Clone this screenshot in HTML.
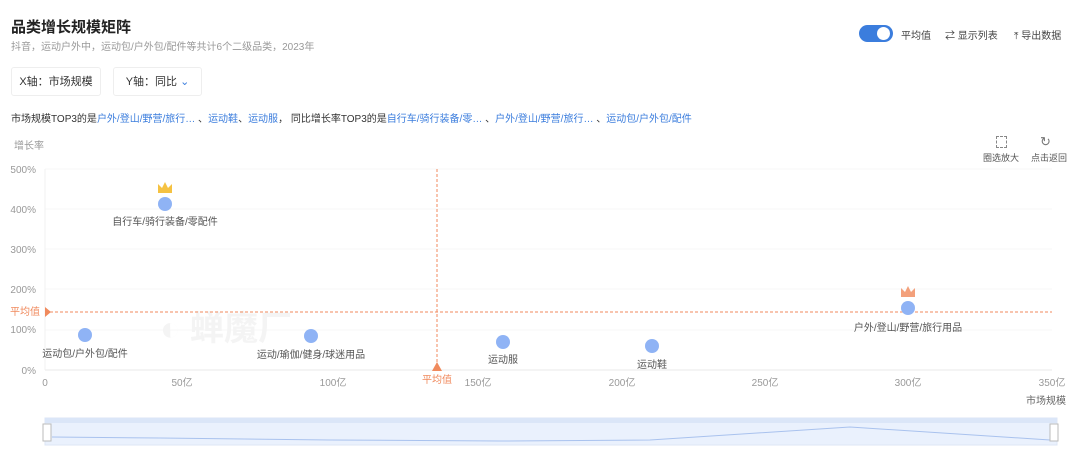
<!DOCTYPE html>
<html><head><meta charset="utf-8"><style>
body{margin:0;width:1080px;height:457px;background:#fff;font-family:"Liberation Sans","Noto Sans CJK SC",sans-serif;position:relative;overflow:hidden;color:#333}
.a{position:absolute;white-space:nowrap}
.btn{position:absolute;top:67px;height:29px;border:1px solid #eee;border-radius:3px;font-size:11px;line-height:29px;color:#333;box-sizing:border-box;white-space:nowrap;text-align:center}
a{color:#3b7ddd;text-decoration:none}
</style></head><body>
<div class="a" style="left:11px;top:16px;font-size:15px;font-weight:bold;color:#222">品类增长规模矩阵</div>
<div class="a" style="left:11px;top:38px;font-size:10px;color:#999">抖音，运动户外中，运动包/户外包/配件等共计6个二级品类，2023年</div>
<div class="btn" style="left:11px;width:90px">X轴：市场规模</div>
<div class="btn" style="left:113px;width:89px">Y轴：同比 <span style="color:#3b7ddd">&#8964;</span></div>
<div class="a" style="left:11px;top:110px;font-size:10px;color:#333">市场规模TOP3的是<a>户外/登山/野营/旅行…</a> 、<a>运动鞋</a>、<a>运动服</a>， 同比增长率TOP3的是<a>自行车/骑行装备/零…</a> 、<a>户外/登山/野营/旅行…</a> 、<a>运动包/户外包/配件</a></div>
<div class="a" style="left:14px;top:137px;font-size:10px;color:#999">增长率</div>
<div class="a" style="left:859px;top:25px;width:34px;height:17px;background:#3b7ddd;border-radius:9px"></div>
<div class="a" style="left:877px;top:27px;width:13px;height:13px;background:#fff;border-radius:50%"></div>
<div class="a" style="left:901px;top:27px;font-size:10px;color:#444">平均值</div>
<div class="a" style="left:945px;top:27px;font-size:10px;color:#444">⇄ 显示列表</div>
<div class="a" style="left:1014px;top:27px;font-size:10px;color:#444">⤒ 导出数据</div>
<div class="a" style="left:996px;top:136px;width:9px;height:10px;border:1px dashed #888"></div>
<div class="a" style="left:1040px;top:134px;font-size:13px;color:#777">↻</div>
<div class="a" style="left:983px;top:151px;font-size:9px;color:#555">圈选放大</div>
<div class="a" style="left:1031px;top:151px;font-size:9px;color:#555">点击返回</div>
<svg class="a" style="left:0;top:0" width="1080" height="457" font-family="Liberation Sans, Noto Sans CJK SC, sans-serif">
<g stroke="#f7f7f7"><line x1="45" x2="1052" y1="169" y2="169"/><line x1="45" x2="1052" y1="209" y2="209"/><line x1="45" x2="1052" y1="249" y2="249"/><line x1="45" x2="1052" y1="289" y2="289"/><line x1="45" x2="1052" y1="330" y2="330"/></g>
<line x1="45" x2="1052" y1="370" y2="370" stroke="#e8e8e8"/>
<line x1="45" x2="45" y1="169" y2="370" stroke="#f0f0f0"/>
<g font-size="10" fill="#999" text-anchor="end"><text x="36" y="173">500%</text><text x="36" y="213">400%</text><text x="36" y="253">300%</text><text x="36" y="293">200%</text><text x="36" y="333">100%</text><text x="36" y="374">0%</text></g>
<g font-size="10" fill="#999" text-anchor="middle"><text x="45" y="386">0</text><text x="182" y="386">50亿</text><text x="333" y="386">100亿</text><text x="478" y="386">150亿</text><text x="622" y="386">200亿</text><text x="765" y="386">250亿</text><text x="908" y="386">300亿</text><text x="1052" y="386">350亿</text></g>
<text x="1066" y="404" font-size="10" fill="#666" text-anchor="end">市场规模</text>
<text x="160" y="340" font-size="34" fill="#f4f4f4" font-weight="bold">◐ 蝉魔厂</text>
<line x1="45" x2="1052" y1="312" y2="312" stroke="#f08a5d" stroke-dasharray="3,2"/>
<line x1="437" x2="437" y1="169" y2="370" stroke="#f08a5d" stroke-dasharray="3,2"/>
<polygon points="45,307 51,312 45,317" fill="#f08a5d"/>
<polygon points="437,362 442,371 432,371" fill="#f08a5d"/>
<text x="10" y="315" font-size="10" fill="#f08a5d">平均值</text>
<text x="422" y="383" font-size="10" fill="#f08a5d">平均值</text>
<g fill="#8fb3f5"><circle cx="85" cy="335" r="7"/><circle cx="165" cy="204" r="7"/><circle cx="311" cy="336" r="7"/><circle cx="503" cy="342" r="7"/><circle cx="652" cy="346" r="7"/><circle cx="908" cy="308" r="7"/></g>
<polygon points="158,193 158,184 162,188 165,182 168,188 172,184 172,193" fill="#f5c242"/>
<polygon points="901,297 901,288 905,292 908,286 911,292 915,288 915,297" fill="#f3a07b"/>
<g font-size="10" fill="#555" text-anchor="middle"><text x="85" y="357">运动包/户外包/配件</text><text x="165" y="225">自行车/骑行装备/零配件</text><text x="311" y="358">运动/瑜伽/健身/球迷用品</text><text x="503" y="363">运动服</text><text x="652" y="368">运动鞋</text><text x="908" y="331">户外/登山/野营/旅行用品</text></g>
<rect x="45" y="418" width="1012" height="27" fill="#eaf1fd" stroke="#dde6f5"/>
<rect x="45" y="418" width="1012" height="5" fill="#dbe6f8"/>
<path d="M52 437 L160 438 L330 440 L500 441 L650 440 L850 427 L1050 440" fill="none" stroke="#a9c2ee"/>
<rect x="43" y="424" width="8" height="17" fill="#fff" stroke="#bbb"/>
<rect x="1050" y="424" width="8" height="17" fill="#fff" stroke="#bbb"/>
</svg>
</body></html>
